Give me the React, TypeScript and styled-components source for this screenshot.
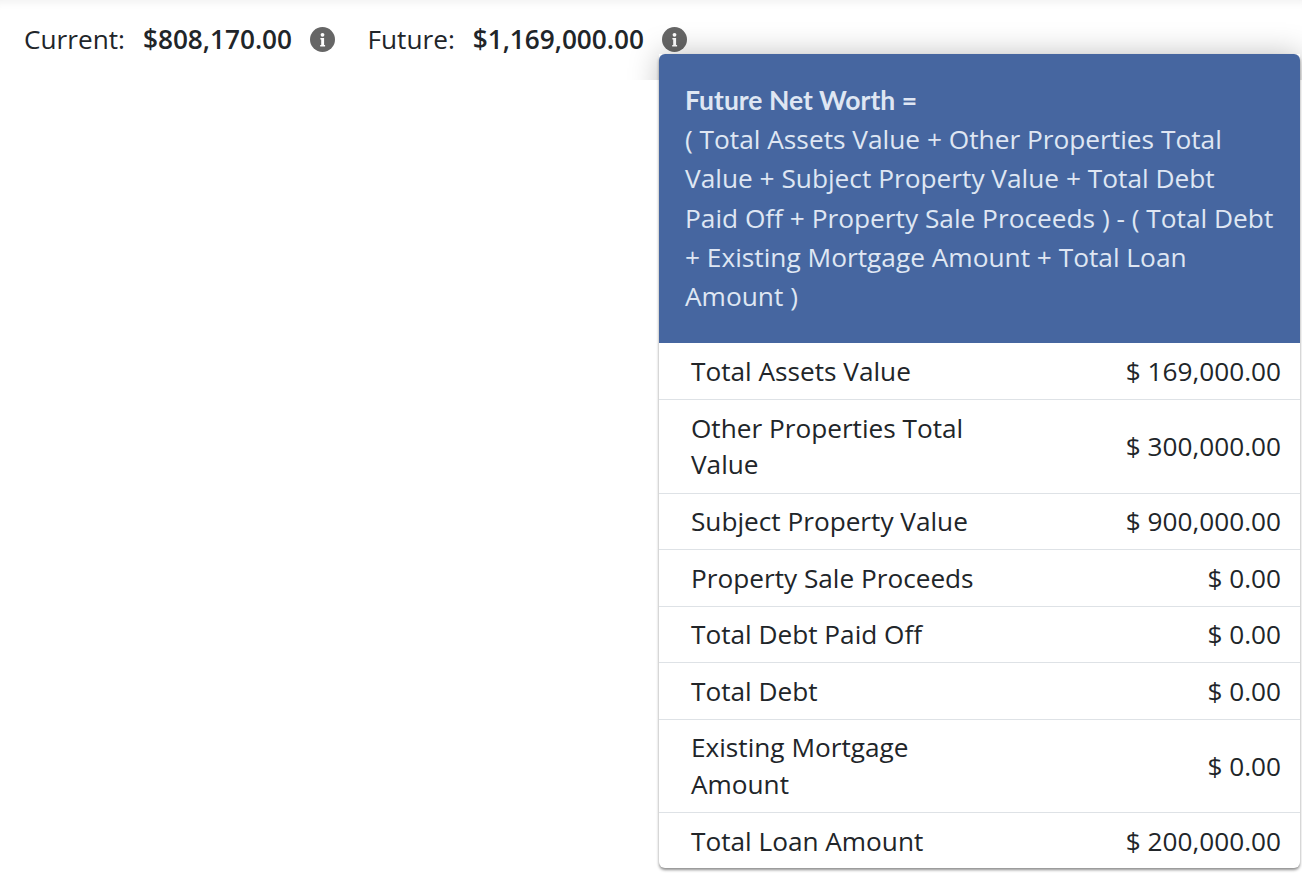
import React from 'react';
import styled, { createGlobalStyle } from 'styled-components';

const GlobalStyle = createGlobalStyle`
  html, body {
    margin: 0;
    padding: 0;
    background: #fff;
    overflow: hidden;
  }
  body {
    font-family: "Open Sans", "Liberation Sans", sans-serif;
    color: #212529;
  }
`;

const Page = styled.div`
  position: relative;
  width: 1302px;
  height: 875px;
  overflow: hidden;
`;

const TopBar = styled.div`
  position: relative;
  height: 80px;
  overflow: hidden;
  box-sizing: border-box;
  padding: 22px 0 0 24px;
  display: flex;
  align-items: flex-start;
  box-shadow: inset 0 10px 10px -8px #f0f0f0;
`;

const Worth = styled.div`
  display: flex;
  align-items: center;
  height: 34px;
  margin-right: 32.5px;
`;

const WorthLabel = styled.span`
  font-size: 26.2px;
  margin-right: 18px;
  color: #212529;
`;

const WorthValue = styled.span`
  font-size: 26.2px;
  font-weight: 600;
  color: #212529;
  margin-right: 18px;
`;

const InfoBadge = styled.svg`
  width: 25px;
  height: 25px;
  flex: none;
`;

const PopoverGlow = styled.div`
  position: absolute;
  left: 659px;
  top: 54px;
  width: 641px;
  height: 300px;
  box-shadow: 0 0 28px rgba(0, 0, 0, 0.25);
`;

const Popover = styled.div`
  position: absolute;
  left: 659px;
  top: 54px;
  width: 641px;
  height: 814px;
  background: #fff;
  border-radius: 6px;
  overflow: hidden;
  box-shadow: 0 2px 3px rgba(0, 0, 0, 0.45);
`;

const PopoverHead = styled.div`
  background: #4666a0;
  color: #dfe6f3;
  font-size: 26.27px;
  line-height: 39.2px;
  padding: 27px 26.2px 26px 26px;
  height: 289px;
  box-sizing: border-box;
`;

const HeadTitle = styled.div`
  font-family: "Lato", "Open Sans", sans-serif;
  font-weight: 700;
  font-size: 26.5px;
`;

const RowList = styled.div`
  padding-top: 0.8px;
`;

const Row = styled.div`
  display: flex;
  align-items: center;
  justify-content: space-between;
  box-sizing: border-box;
  padding: 9.5px 19px 9.5px 32px;
  font-size: 26.2px;
  line-height: 36.6px;
  color: #212529;
  border-bottom: 1px solid #dee2e6;

  &:last-child {
    border-bottom: none;
  }
`;

const RowLabel = styled.div`
  width: 300px;
`;

const RowValue = styled.div`
  text-align: right;
`;

type RowData = { label: string; value: string };

const rows: RowData[] = [
  { label: 'Total Assets Value', value: '$ 169,000.00' },
  { label: 'Other Properties Total Value', value: '$ 300,000.00' },
  { label: 'Subject Property Value', value: '$ 900,000.00' },
  { label: 'Property Sale Proceeds', value: '$ 0.00' },
  { label: 'Total Debt Paid Off', value: '$ 0.00' },
  { label: 'Total Debt', value: '$ 0.00' },
  { label: 'Existing Mortgage Amount', value: '$ 0.00' },
  { label: 'Total Loan Amount', value: '$ 200,000.00' },
];

function Info() {
  return (
    <InfoBadge viewBox="0 0 25 25">
      <circle cx="12.5" cy="12.5" r="12.5" fill="#666666" />
      <circle cx="12.5" cy="7.8" r="1.9" fill="#fff" />
      <path d="M10.4 11h3.7v6.9h1v1.6H10.2v-1.6h1v-5.3h-.8z" fill="#fff" />
    </InfoBadge>
  );
}

export default function App() {
  return (
    <Page>
      <GlobalStyle />
      <TopBar>
        <Worth>
          <WorthLabel>Current:</WorthLabel>
          <WorthValue>$808,170.00</WorthValue>
          <Info />
        </Worth>
        <Worth>
          <WorthLabel>Future:</WorthLabel>
          <WorthValue>$1,169,000.00</WorthValue>
          <Info />
        </Worth>
        <PopoverGlow />
      </TopBar>
      <Popover>
        <PopoverHead>
          <HeadTitle>Future Net Worth =</HeadTitle>
          ( Total Assets Value + Other Properties Total Value + Subject Property Value + Total Debt Paid Off + Property Sale Proceeds ) - ( Total Debt + Existing Mortgage Amount + Total Loan Amount )
        </PopoverHead>
        <RowList>
          {rows.map((row) => (
            <Row key={row.label}>
              <RowLabel>{row.label}</RowLabel>
              <RowValue>{row.value}</RowValue>
            </Row>
          ))}
        </RowList>
      </Popover>
    </Page>
  );
}
